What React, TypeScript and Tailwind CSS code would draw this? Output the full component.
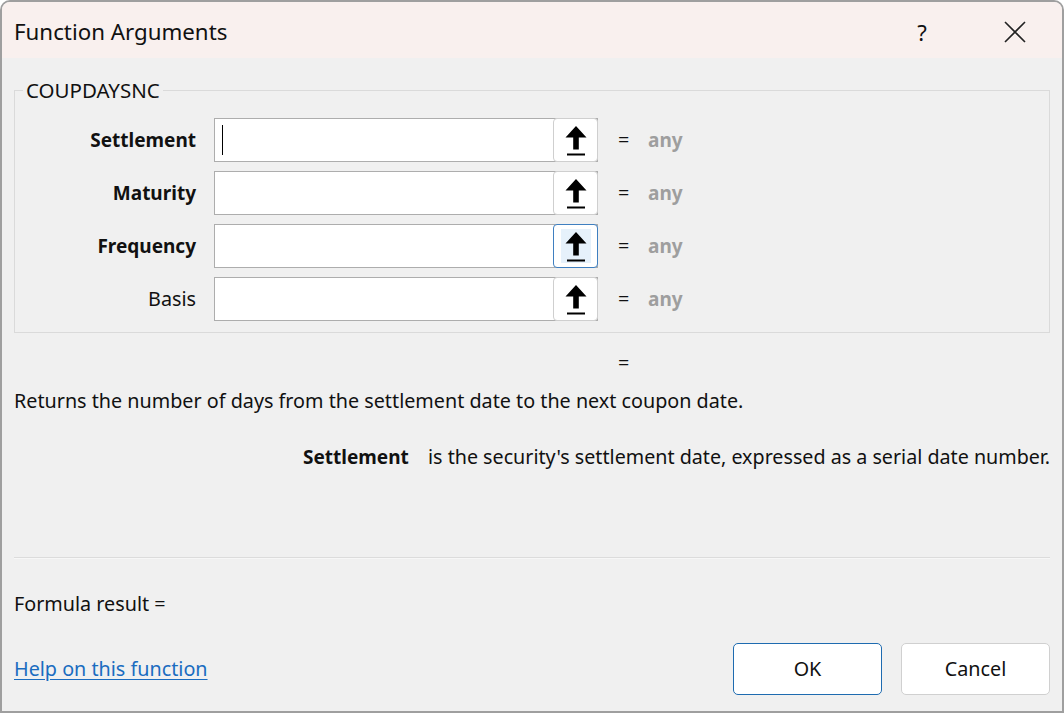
import React from 'react'

const UploadArrow = () => (
  <svg width="22" height="31" viewBox="0 0 22 31" fill="none">
    <path d="M11 0 L21.5 11.5 H13.8 V23.5 H8.2 V11.5 H0.5 Z" fill="#000" />
    <rect x="2" y="27.5" width="18" height="2" fill="#000" />
  </svg>
)

const args = [
  { name: 'Settlement', bold: true, caret: true },
  { name: 'Maturity', bold: true },
  { name: 'Frequency', bold: true, focused: true },
  { name: 'Basis', bold: false },
]

const ArgRow = ({ name, bold, caret, focused }: { name: string; bold: boolean; caret?: boolean; focused?: boolean }) => (
  <div className="flex items-center h-[44px]">
    <div className={`w-[181px] text-right ${bold ? 'font-bold text-[19px]' : ''}`}>{name}</div>
    <div className="ml-[18px] flex h-[44px] w-[384px] bg-white border border-[#adadad]">
      <div className="flex-1 flex items-center pl-[7px]">
        {caret && <div className="w-[1px] h-[30px] bg-black" />}
      </div>
      <button
        className={`-my-[1px] -mr-[1px] w-[45px] h-[44px] shrink-0 flex items-center justify-center rounded-[4px] border ${focused ? 'border-[#3f7fc0]' : 'border-[#cfcfcf]'} bg-white`}
      >
        <span className={`flex items-center justify-center w-[30px] h-[34px] pt-[2px] shrink-0 ${focused ? 'bg-[#e6f1fb]' : ''}`}>
          <UploadArrow />
        </span>
      </button>
    </div>
    <div className="ml-[20px] w-[30px]">=</div>
    <div className="font-bold text-[19px] text-[#9e9e9e]">any</div>
  </div>
)

export default function App() {
  return (
    <div
      className="w-[1064px] h-[713px] bg-[#f0f0f0] text-[19.75px] text-[#111] border-2 border-[#9f9f9f] rounded-t-[10px] overflow-hidden flex flex-col whitespace-nowrap"
      style={{ fontFamily: '"Noto Sans", "Open Sans", sans-serif' }}
    >
      <div className="h-[56px] bg-[#f9f0ee] flex items-center pl-[12px] shrink-0">
        <div className="flex-1 text-[22.3px] pt-[4px]">Function Arguments</div>
        <div className="w-[60px] text-center text-[22px] pt-[4px] mr-[30px]">?</div>
        <div className="w-[80px] flex justify-center pt-[4px] pr-[14px]">
          <svg width="22" height="22" viewBox="0 0 22 22">
            <path d="M1 1 L21 21 M21 1 L1 21" stroke="#222" strokeWidth="1.6" />
          </svg>
        </div>
      </div>

      <div className="flex-1 flex flex-col px-[12px]">
        <fieldset className="mt-[20px] border border-[#dadada] pb-[11px] pt-[16px]">
          <legend className="ml-[8px] px-[3px] leading-[24px] text-[20.5px]">COUPDAYSNC</legend>
          <div className="flex flex-col gap-[9px]">
            {args.map((a) => (
              <ArgRow key={a.name} {...a} />
            ))}
          </div>
        </fieldset>

        <div className="mt-[17px] pl-[604px] leading-[26px]">=</div>
        <div className="mt-[12px] leading-[26px]">Returns the number of days from the settlement date to the next coupon date.</div>
        <div className="mt-[30px] flex leading-[26px] pl-[289px]">
          <span className="font-bold text-[19px] w-[125px] shrink-0">Settlement</span>
          <span className="text-[19.7px]">is the security's settlement date, expressed as a serial date number.</span>
        </div>

        <div className="mt-[87px] h-[2px] border-t border-[#dcdcdc] bg-[#f7f7f7]" />

        <div className="mt-[32px] leading-[26px]">Formula result =</div>

        <div className="mt-[26px] flex items-center">
          <a href="#" className="flex-1 text-[#1a6cc0] underline underline-offset-[3px]">Help on this function</a>
          <button className="w-[149px] h-[52px] bg-white border border-[#1e6bb0] rounded-[5px]">OK</button>
          <button className="ml-[19px] w-[149px] h-[52px] bg-white border border-[#d0d0d0] rounded-[5px]">Cancel</button>
        </div>
      </div>
    </div>
  )
}
